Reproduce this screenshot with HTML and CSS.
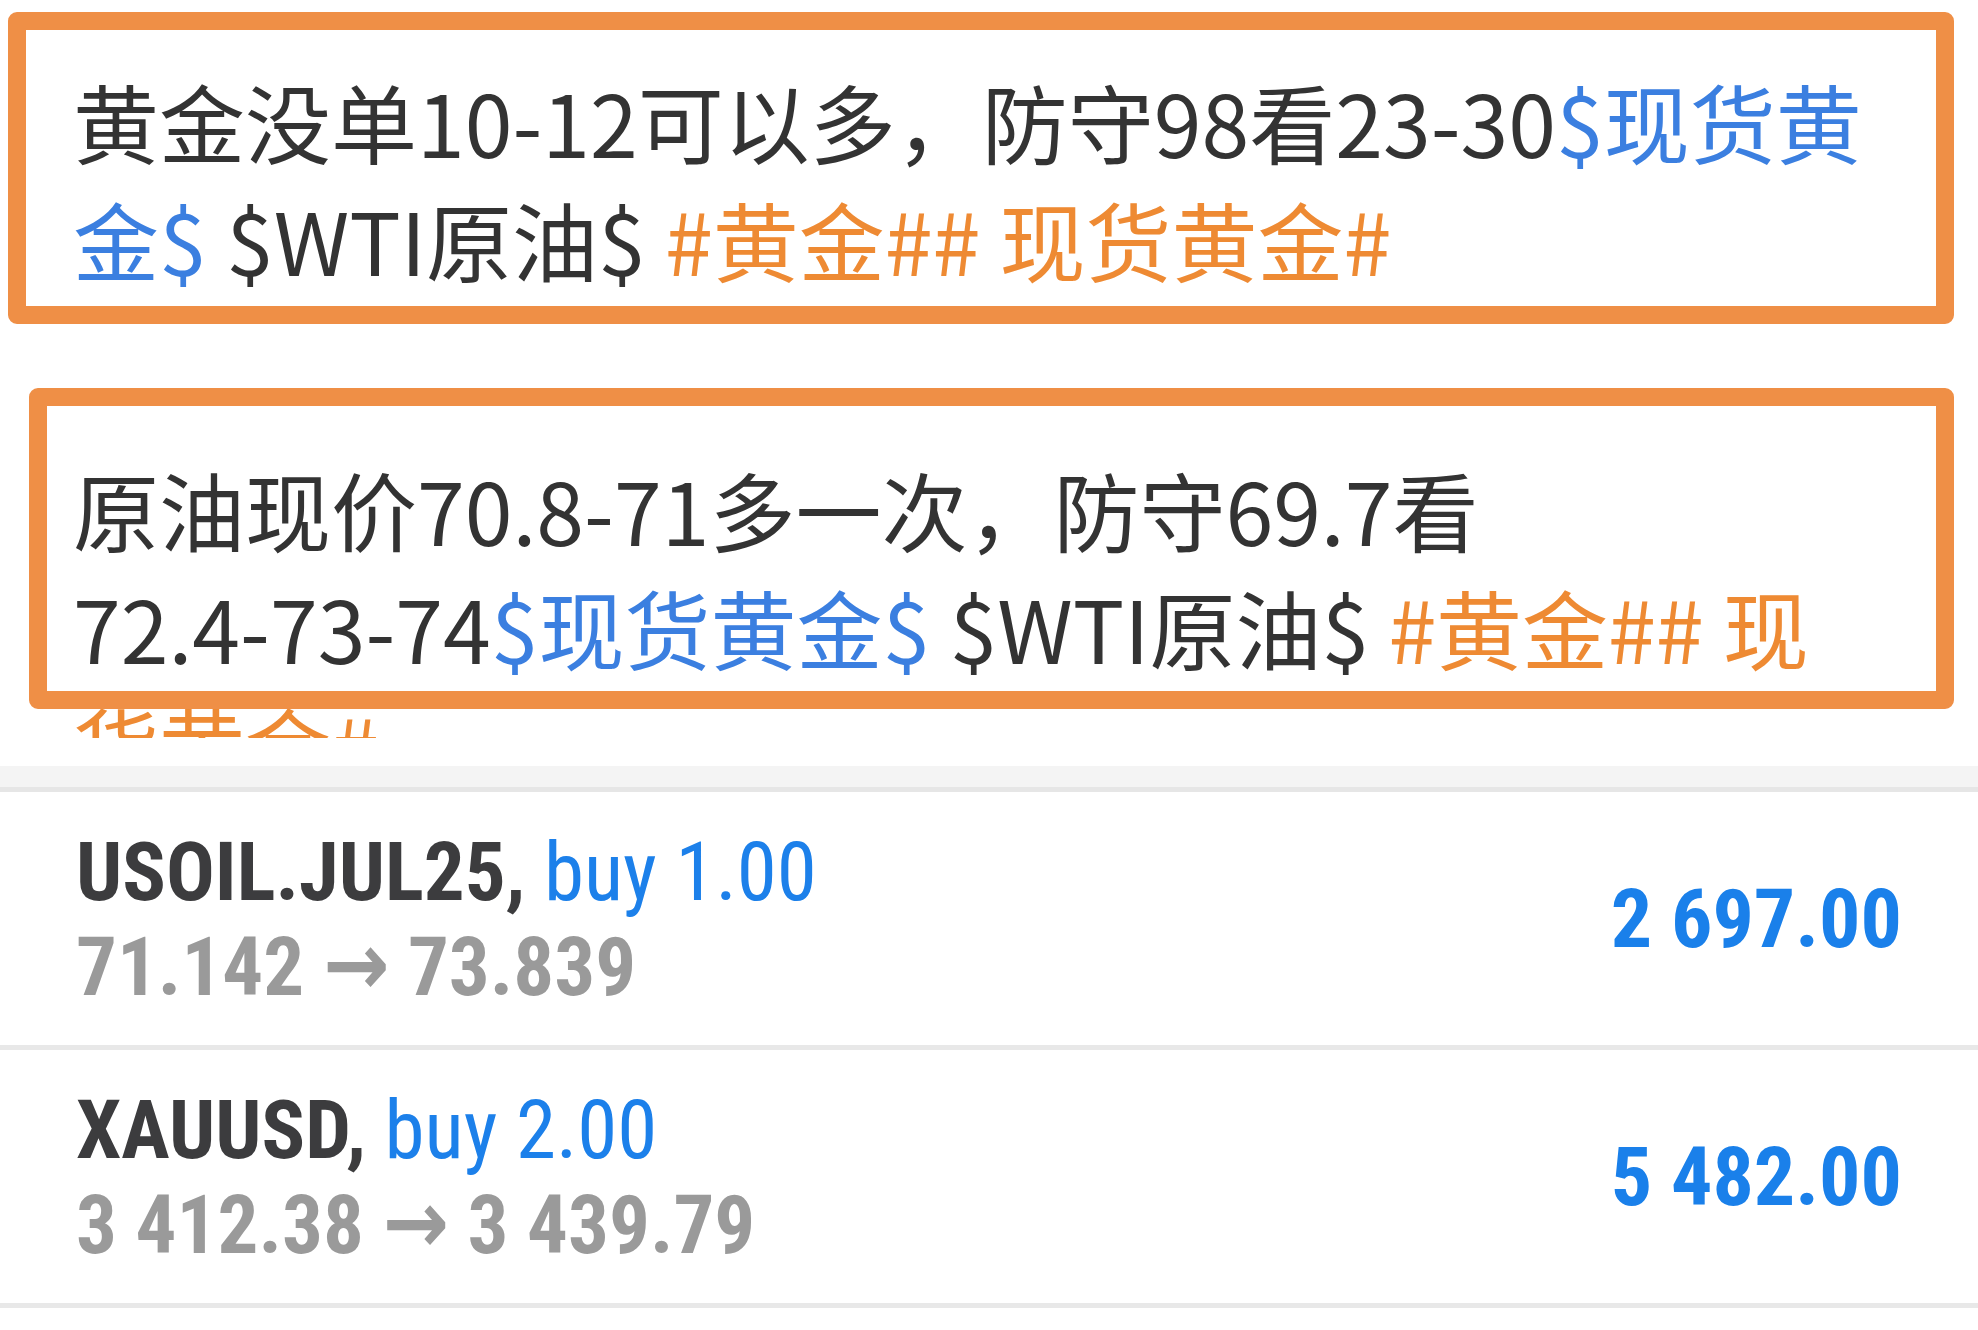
FILE: index.html
```html
<!DOCTYPE html>
<html lang="zh-CN">
<head>
<meta charset="utf-8">
<title>Posts and positions</title>
<link rel="stylesheet" href="styles.css">
</head>
<body>
<main class="screen">
  <div class="feed">
    <section class="post post-first">
      <p class="post-text">黄金没单10-12可以多，防守98看23-30<span class="stock">$现货黄</span><br><span class="stock">金$</span> $WTI原油$ <span class="tag">#黄金## 现货黄金#</span></p>
      <div class="mark mark-first"></div>
    </section>
    <section class="post post-second">
      <p class="post-text">原油现价70.8-71多一次，防守69.7看<br>72.4-73-74<span class="stock">$现货黄金$</span> $WTI原油$ <span class="tag">#黄金## 现</span><br><span class="tag">货黄金#</span></p>
      <div class="mark mark-second"></div>
    </section>
  </div>
  <div class="band"></div>
  <ul class="positions">
    <li class="position">
      <div class="position-info">
        <div class="position-title"><span class="symbol">USOIL.JUL25,</span> <span class="side">buy 1.00</span></div>
        <div class="position-prices">71.142 <span class="arrow">→</span> 73.839</div>
      </div>
      <div class="position-profit">2 697.00</div>
    </li>
    <li class="position">
      <div class="position-info">
        <div class="position-title"><span class="symbol">XAUUSD,</span> <span class="side">buy 2.00</span></div>
        <div class="position-prices">3 412.38 <span class="arrow">→</span> 3 439.79</div>
      </div>
      <div class="position-profit">5 482.00</div>
    </li>
  </ul>
</main>
</body>
</html>
```
FILE: styles.css
```css
* { box-sizing: border-box; }
html, body { margin: 0; padding: 0; background: #ffffff; }
body { width: 1978px; height: 1330px; overflow: hidden; }

.screen { width: 1978px; }

.feed { background: #ffffff; }

.post { position: relative; overflow: hidden; }
.post-first { height: 380px; padding: 62px 0 0 73px; }
.post-second { height: 358px; padding: 70px 0 0 73px; }

.post-text {
  margin: 0;
  font-family: "Noto Sans CJK SC", "Noto Sans", sans-serif;
  font-size: 86px;
  line-height: 118px;
  color: #333333;
  white-space: nowrap;
}
.stock { color: #3b7fe0; }
.tag { color: #ee8a33; }

.mark {
  position: absolute;
  border: 18px solid #ef8f46;
  border-radius: 9px;
}
.mark-first { left: 8px; top: 12px; width: 1946px; height: 312px; }
.mark-second { left: 29px; top: 8px; width: 1925px; height: 321px; }

.band {
  height: 54px;
  border-top: 28px solid #ffffff;
  background: #f4f4f4;
  border-bottom: 5px solid #e6e6e6;
}

.positions { list-style: none; margin: 0; padding: 0; }
.position {
  height: 258px;
  padding: 0 76px;
  display: flex;
  align-items: center;
  justify-content: space-between;
  border-bottom: 5px solid #e8e8e8;
  font-family: "Roboto Condensed", "Liberation Sans Narrow", "DejaVu Sans", sans-serif;
  font-stretch: condensed;
}
.position-info { display: flex; flex-direction: column; padding-top: 4px; }
.position-title, .position-prices {
  font-size: 81px;
  line-height: 92px;
  white-space: nowrap;
}
.symbol { font-weight: 700; color: #3c3c3e; }
.side { font-weight: 400; color: #1c80ea; }
.position-prices { font-weight: 700; color: #9a9a9a; }
.arrow {
  font-family: "DejaVu Sans", sans-serif;
  font-size: 88px;
  font-weight: 700;
  line-height: 92px;
}
.position-profit {
  font-size: 82px;
  font-weight: 700;
  color: #1a80ea;
  white-space: nowrap;
}
```
